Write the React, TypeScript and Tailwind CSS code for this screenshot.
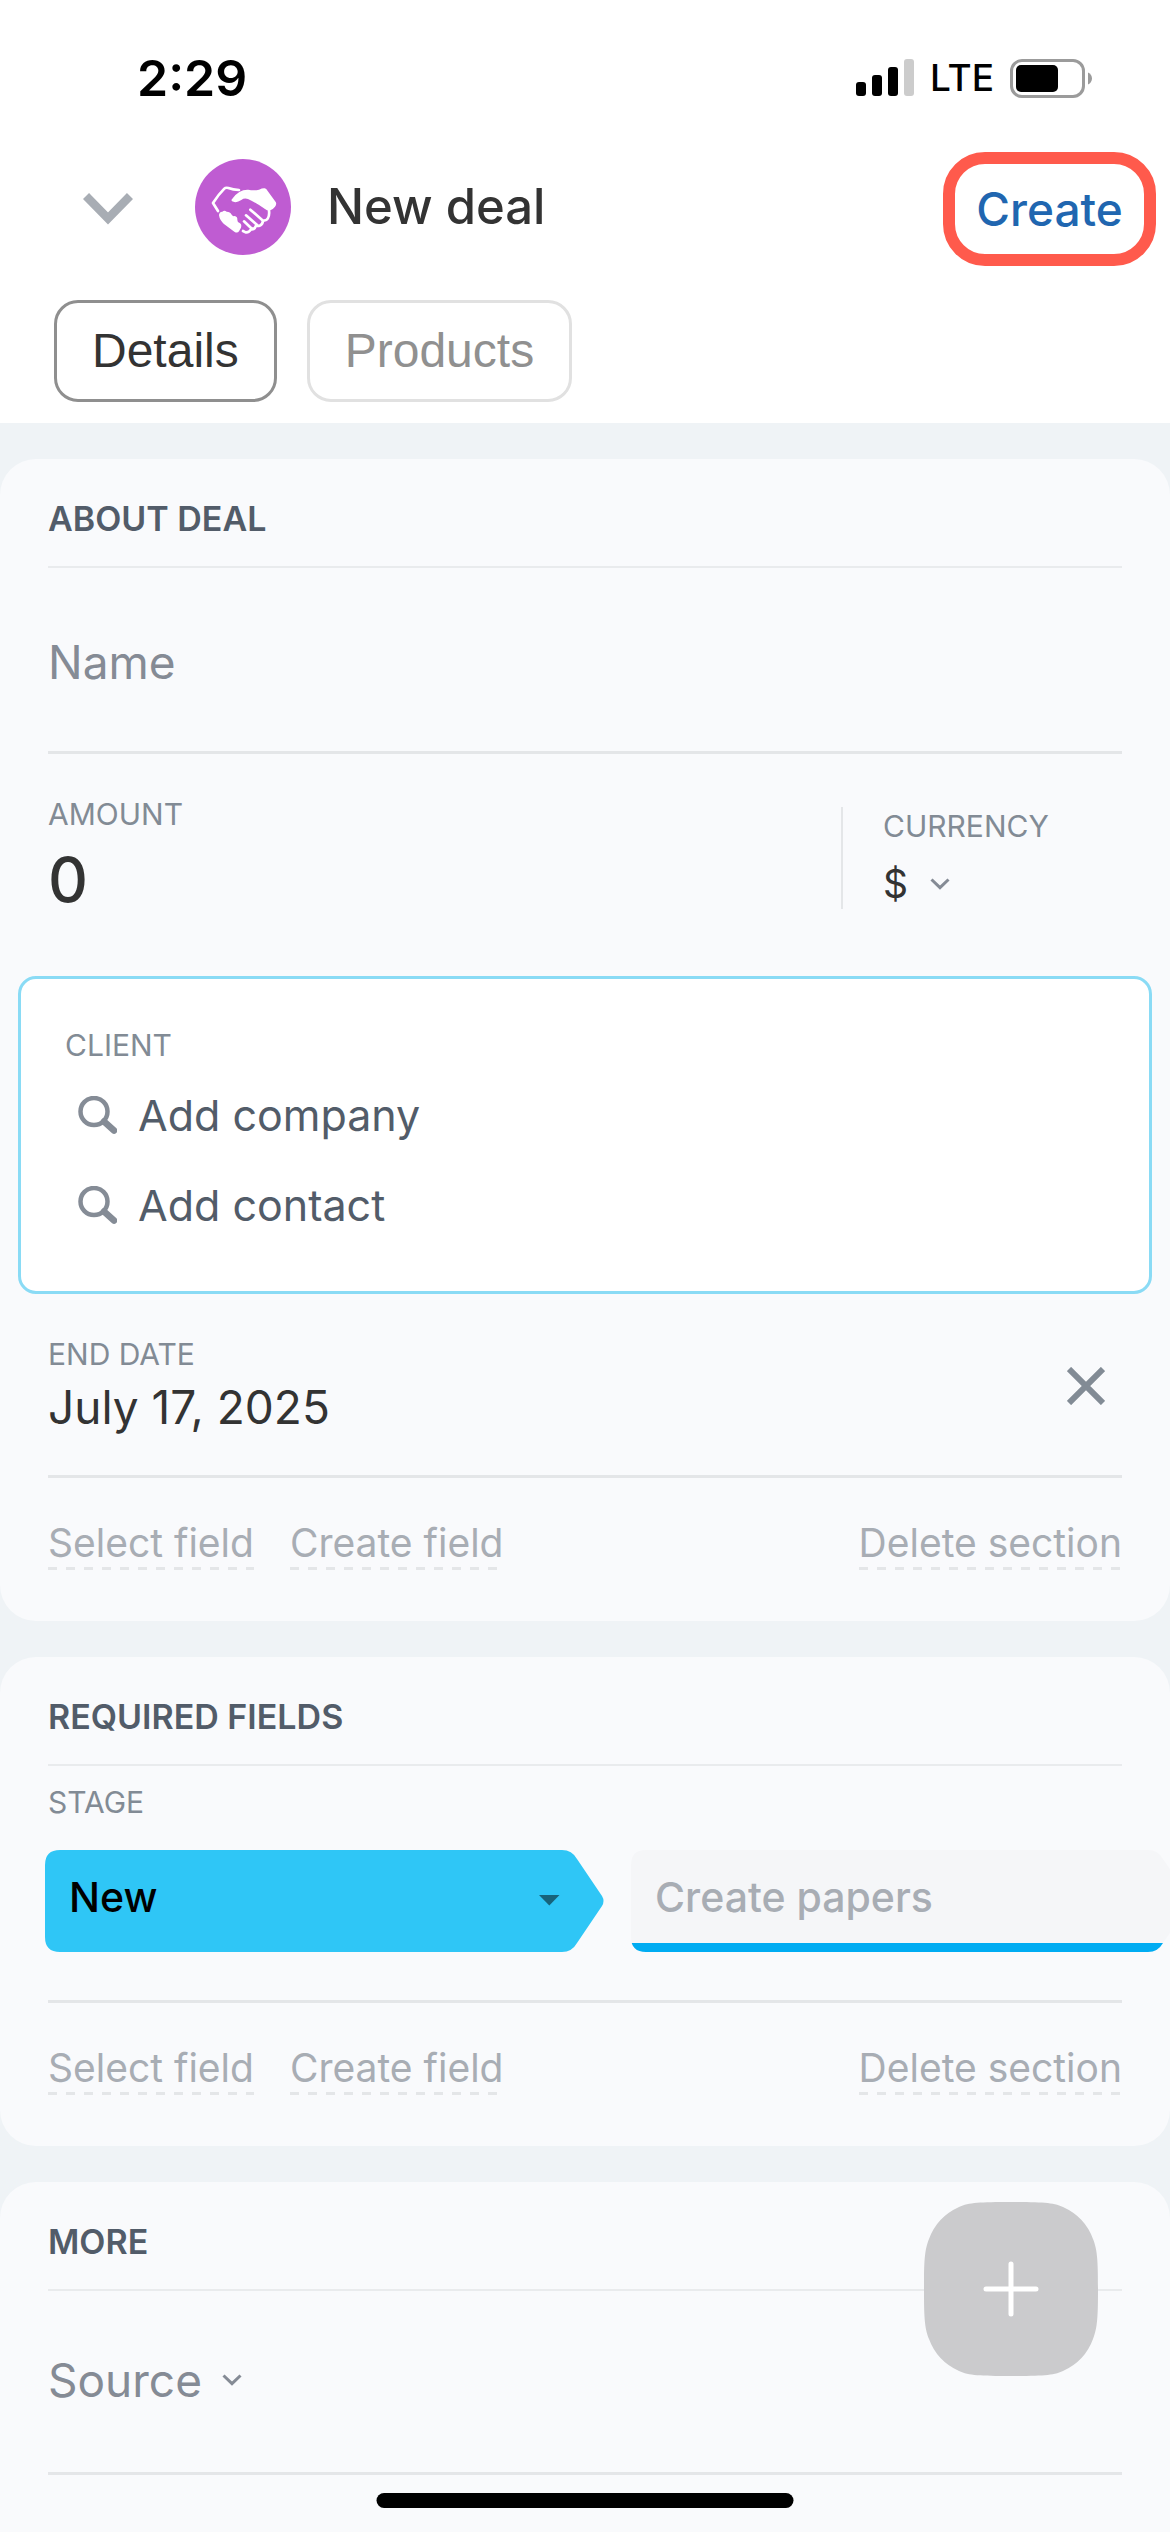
import { useState } from "react";

function SignalIcon() {
  return (
    <svg width="58" height="38" viewBox="0 0 58 38" aria-hidden="true">
      <rect x="0" y="23" width="10" height="14" rx="3" fill="#000" />
      <rect x="16" y="16" width="10" height="21" rx="3" fill="#000" />
      <rect x="32" y="8" width="10" height="29" rx="3" fill="#000" />
      <rect x="48" y="0" width="10" height="37" rx="3" fill="#ccc" />
    </svg>
  );
}

function BatteryIcon() {
  return (
    <svg width="82" height="39" viewBox="0 0 82 39" aria-hidden="true">
      <rect x="1.5" y="1.5" width="72" height="36" rx="10.5" fill="none" stroke="#9b9b9b" strokeWidth="3" />
      <rect x="6" y="6" width="42" height="27" rx="5" fill="#000" />
      <path d="M78 13.500c2.600 1.200 4 3.400 4 6s-1.400 4.800-4 6z" fill="#9b9b9b" />
    </svg>
  );
}

function HandshakeBadge() {
  return (
    <svg width="96" height="96" viewBox="44 56 288 288" className="shrink-0" aria-hidden="true">
      <circle cx="188" cy="200" r="144" fill="#bf5cd2" />
      <path d="M113 212 L98 188 Q114 163 132 145 Q136 141 144 143 Q158 148 176 149" fill="none" stroke="#fff" strokeWidth="8" strokeLinecap="round" strokeLinejoin="round" />
      <path d="M153 179 Q163 163 177 155 Q190 147 204 148 Q220 152 236 148 Q247 143 253 144 Q258 145 262 152 L286 185 Q290 191 284 199 Q277 208 270 210 Q262 212 254 206 Q228 188 203 176 Q192 172 183 179 Q171 187 162 185 Q153 184 153 179Z" fill="#fff" />
      <path d="M116 225 Q116 215 126 214 Q132 209 139 214 Q150 214 153 222 Q156 229 163 227 Q172 229 171 239 Q171 246 178 248 Q185 252 182 262 L176 273 Q171 280 162 274 L130 250 Q118 239 116 225Z" fill="#fff" />
      <path d="M266 211 Q268 226 262 235 Q258 242 248 241 Q247 253 238 256 Q232 258 227 256 Q223 269 212 267 Q206 277 196 276 L188 272 M248 241 L210 208 M233 256 L197 225 M216 267 L191 243" fill="none" stroke="#fff" strokeWidth="8" strokeLinecap="round" strokeLinejoin="round" />
    </svg>
  );
}

function SmallChevron() {
  return (
    <svg width="20" height="12" viewBox="0 0 20 12" className="pointer-events-none shrink-0" aria-hidden="true">
      <path d="M1.500 1.500 L10 9.700 L18.500 1.500" fill="none" stroke="#858b95" strokeWidth="3" />
    </svg>
  );
}

function SearchIcon() {
  return (
    <svg width="39" height="38" viewBox="0 0 39 38" className="shrink-0" aria-hidden="true">
      <circle cx="16" cy="15.500" r="13.500" fill="none" stroke="#858c96" strokeWidth="4.500" />
      <path d="M26 25.500 L36 34.500" stroke="#858c96" strokeWidth="6.500" strokeLinecap="round" />
    </svg>
  );
}

const STAGE_PATH =
  "M15 0 H517 Q527 0 532 9 L557 46 Q560 51 557 56 L532 93 Q527 102 517 102 H15 Q0 102 0 87 V15 Q0 0 15 0Z";

function Stage({ name, active }: { name: string; active?: boolean }) {
  return (
    <button className="relative h-[102px] w-[559px] shrink-0 text-left">
      <svg viewBox="0 0 559 102" className="absolute inset-0 h-full w-full" aria-hidden="true">
        {active ? (
          <>
            <path d={STAGE_PATH} fill="#2fc6f6" />
            <path d="M494 45 H514.500 L504.300 55.500Z" fill="#17637b" />
          </>
        ) : (
          <>
            <clipPath id="stage-shape">
              <path d={STAGE_PATH} />
            </clipPath>
            <g clipPath="url(#stage-shape)">
              <rect width="559" height="102" fill="#f5f6f8" />
              <rect y="93" width="559" height="9" fill="#00acf2" />
            </g>
          </>
        )}
      </svg>
      <span
        className={
          active
            ? "relative block px-6 pb-2 text-[41px] leading-[52px] font-medium text-black"
            : "relative block px-6 pb-2 text-[41px] leading-[52px] font-medium text-[#a8adb4]"
        }
      >
        {name}
      </span>
    </button>
  );
}

function SectionTitle({ children }: { children: string }) {
  return (
    <div className="mx-12 flex h-[109px] items-center border-b-2 border-[#e9ebed] pt-3">
      <h2 className="text-[34px] leading-10 font-semibold text-[#525c69]">{children}</h2>
    </div>
  );
}

const LABEL = "block text-[30px] leading-10 text-[#828b95]";

function ActionLink({ children }: { children: string }) {
  return (
    <a
      href="#"
      className="block bg-[linear-gradient(to_right,#e4e6e8_50%,transparent_50%)] bg-[length:18px_3px] bg-left-bottom bg-repeat-x pb-[3px] text-[39px] leading-[48px] whitespace-nowrap text-[#a8adb4]"
    >
      {children}
    </a>
  );
}

function SectionActions() {
  return (
    <div className="mx-12 flex items-start gap-9 border-t-3 border-[#e4e6e8] pt-[41px] pb-[51px]">
      <ActionLink>Select field</ActionLink>
      <ActionLink>Create field</ActionLink>
      <div className="ml-auto">
        <ActionLink>Delete section</ActionLink>
      </div>
    </div>
  );
}

function ClientRow({ children }: { children: string }) {
  return (
    <button className="flex h-[90px] w-full items-center gap-[21px] pl-[13px] text-left text-[43px] leading-[56px] text-[#525c69]">
      <SearchIcon />
      {children}
    </button>
  );
}

export default function App() {
  const [name, setName] = useState("");
  const [amount, setAmount] = useState("0");

  return (
    <div className="flex min-h-screen flex-col overflow-x-hidden bg-[#eff3f6] font-['Inter',sans-serif]">
      <header className="bg-white pb-[21px]">
        <div className="flex h-[152px] items-center pt-1 pr-[78px] pl-[137px]">
          <span className="text-[50px] leading-[60px] font-semibold text-black">2:29</span>
          <div className="ml-auto flex items-center gap-4">
            <SignalIcon />
            <span className="text-[37px] leading-[48px] font-medium text-black">LTE</span>
            <BatteryIcon />
          </div>
        </div>

        <div className="flex h-[114px] items-center pr-[14px] pl-[83px]">
          <button aria-label="Close" className="shrink-0">
            <svg width="50" height="32" viewBox="0 0 50 32" aria-hidden="true">
              <path d="M3 3 L25 25.500 L47 3" fill="none" stroke="#a8adb4" strokeWidth="8.500" />
            </svg>
          </button>
          <div className="ml-[62px] flex items-center gap-9 pb-1">
            <HandshakeBadge />
            <h1 className="text-[49px] leading-[60px] font-medium whitespace-nowrap text-[#333]">New deal</h1>
          </div>
          <button className="ml-auto flex h-[114px] w-[213px] items-center justify-center rounded-[42px] border-12 border-[#ff5a4c] text-[46px] leading-[56px] font-medium text-[#2066b0]">
            Create
          </button>
        </div>

        <nav className="mt-[34px] flex gap-[30px] pl-[54px] font-['Liberation_Sans',sans-serif] text-[48px] leading-[60px]">
          <button className="flex h-[102px] items-center rounded-3xl border-3 border-[#8f8f8f] px-[35px] text-[#333]">
            Details
          </button>
          <button className="flex h-[102px] items-center rounded-3xl border-3 border-[#e1e1e1] px-[35px] text-[#909090]">
            Products
          </button>
        </nav>
      </header>

      <main className="flex grow flex-col gap-9 pt-9">
        <section className="rounded-[36px] bg-[#f9fafc]">
          <SectionTitle>ABOUT DEAL</SectionTitle>
          <div className="mx-12 flex h-[186px] items-center border-b-3 border-[#e4e6e8] pt-1">
            <input
              aria-label="Name"
              placeholder="Name"
              value={name}
              onChange={(e) => setName(e.target.value)}
              className="w-full bg-transparent text-[46px] leading-[60px] text-[#333] outline-none placeholder:text-[#858b95] placeholder:opacity-100"
            />
          </div>

          <div className="mx-12 flex items-start pb-[52px]">
            <div className="min-w-0 grow pt-10">
              <label htmlFor="amount" className={LABEL}>
                AMOUNT
              </label>
              <input
                id="amount"
                value={amount}
                onChange={(e) => setAmount(e.target.value)}
                className="block h-[90px] w-full bg-transparent text-[62px] leading-[72px] font-medium text-[#333] outline-none"
              />
            </div>
            <div className="mt-[53px] h-[102px] w-[2px] shrink-0 bg-[#e4e6e8]" />
            <div className="w-[279px] shrink-0 pt-[52px] pl-10">
              <label htmlFor="currency" className={LABEL}>
                CURRENCY
              </label>
              <div className="flex h-[76px] items-center gap-[21px]">
                <select
                  id="currency"
                  className="appearance-none bg-transparent text-[39px] leading-[52px] text-[#333] outline-none"
                >
                  <option>$</option>
                </select>
                <SmallChevron />
              </div>
            </div>
          </div>

          <div className="mx-[18px] rounded-[18px] border-3 border-[#8adbf5] bg-white px-11 pt-[46px] pb-[41px]">
            <h3 className={LABEL}>CLIENT</h3>
            <div className="pt-[5px]">
              <ClientRow>Add company</ClientRow>
              <ClientRow>Add contact</ClientRow>
            </div>
          </div>

          <div className="mx-12 flex items-start pt-10 pb-[35px]">
            <div className="grow">
              <label htmlFor="end-date" className={LABEL}>
                END DATE
              </label>
              <input
                id="end-date"
                readOnly
                value="July 17, 2025"
                className="block h-[66px] w-full bg-transparent text-[46px] leading-[60px] text-[#333] outline-none"
              />
            </div>
            <button aria-label="Clear end date" className="mt-6 mr-2 flex size-14 items-center justify-center">
              <svg width="38" height="38" viewBox="0 0 38 38" aria-hidden="true">
                <path d="M2 2 L36 36 M36 2 L2 36" stroke="#828b95" strokeWidth="6" />
              </svg>
            </button>
          </div>
          <SectionActions />
        </section>

        <section className="rounded-[36px] bg-[#f9fafc]">
          <SectionTitle>REQUIRED FIELDS</SectionTitle>
          <h3 className={`${LABEL} mx-12 pt-4`}>STAGE</h3>
          <div className="mt-7 mb-12 flex gap-[27px] overflow-hidden pl-[45px]">
            <Stage name="New" active />
            <Stage name="Create papers" />
          </div>
          <SectionActions />
        </section>

        <section className="grow rounded-t-[36px] bg-[#f9fafc]">
          <SectionTitle>MORE</SectionTitle>
          <div className="mx-12 flex h-[184px] items-center gap-5 border-b-3 border-[#e4e6e8] pb-1">
            <select
              aria-label="Source"
              className="appearance-none bg-transparent text-[46px] leading-[60px] text-[#858b95] outline-none"
            >
              <option>Source</option>
            </select>
            <SmallChevron />
          </div>
        </section>
      </main>

      <button
        aria-label="Add"
        className="fixed right-[72px] bottom-[156px] size-[174px]"
      >
        <svg viewBox="0 0 174 174" className="h-full w-full" aria-hidden="true">
          <path
            d="M87 0 C118 0 129 .5 139 5 Q161 15 169 37 C173.500 48 174 60 174 87 C174 114 173.500 126 169 137 Q161 159 139 169 C129 173.500 118 174 87 174 C56 174 45 173.500 35 169 Q13 159 5 137 C.5 126 0 114 0 87 C0 60 .5 48 5 37 Q13 15 35 5 C45 .5 56 0 87 0Z"
            fill="#cbcbcd"
          />
          <path d="M87 62 V112 M62 87 H112" stroke="#fff" strokeWidth="5" strokeLinecap="round" />
        </svg>
      </button>
      <div className="fixed bottom-6 left-1/2 h-[15px] w-[417px] -translate-x-1/2 rounded-full bg-black" />
    </div>
  );
}
